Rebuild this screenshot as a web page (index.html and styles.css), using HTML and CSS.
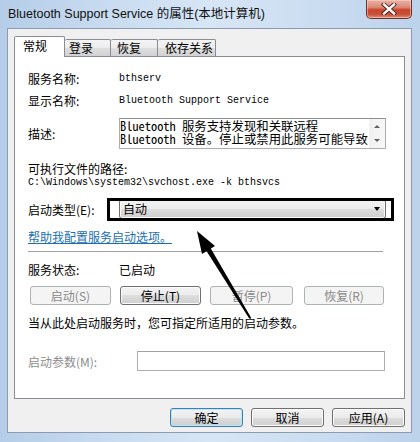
FILE: index.html
```html
<!DOCTYPE html>
<html>
<head>
<meta charset="utf-8">
<title>Bluetooth Support Service 的属性</title>
<link rel="stylesheet" href="styles.css">
</head>
<body>
<div class="window">
  <div class="titlebar">
    <div class="title">Bluetooth Support Service 的属性(本地计算机)</div>
    <div class="close">
      <svg width="16" height="12" viewBox="0 0 16 12"><path d="M3 1.5 L13 10.5 M13 1.5 L3 10.5" stroke="#4a1e18" stroke-width="4.2" stroke-linecap="square"/><path d="M3 1.5 L13 10.5 M13 1.5 L3 10.5" stroke="#ffffff" stroke-width="2.4" stroke-linecap="square"/></svg>
    </div>
  </div>
  <div class="client">
    <div class="tabs">
      <div class="tab active t1">常规</div>
      <div class="tab t2">登录</div>
      <div class="tab t3">恢复</div>
      <div class="tab t4">依存关系</div>
    </div>
    <div class="panel">
      <div class="row r1"><span class="lbl">服务名称:</span><span class="mono">bthserv</span></div>
      <div class="row r2"><span class="lbl">显示名称:</span><span class="mono">Bluetooth Support Service</span></div>
      <div class="row r3"><span class="lbl">描述:</span>
        <div class="desc">
          <div class="desctext">Bluetooth 服务支持发现和关联远程<br>Bluetooth 设备。停止或禁用此服务可能导致</div>
          <div class="vscroll"><span class="up"></span><span class="down"></span></div>
        </div>
      </div>
      <div class="row r4"><span>可执行文件的路径:</span></div>
      <div class="path mono">C:\Windows\system32\svchost.exe -k bthsvcs</div>
      <div class="row r6"><span class="lbl">启动类型(E):</span>
        <div class="combo"><span class="ctext">自动</span><span class="drop"></span></div>
      </div>
      <div class="linkrow"><span class="link">帮助我配置服务启动选项。</span></div>
      <div class="sep"></div>
      <div class="row r8"><span class="lbl">服务状态:</span><span>已启动</span></div>
      <div class="btnrow">
        <div class="btn dis b1">启动(S)</div>
        <div class="btn b2">停止(T)</div>
        <div class="btn dis b3">暂停(P)</div>
        <div class="btn dis b4">恢复(R)</div>
      </div>
      <div class="note">当从此处启动服务时，您可指定所适用的启动参数。</div>
      <div class="row r11"><span class="lbl lbl2 distext">启动参数(M):</span><div class="input"></div></div>
    </div>
    <div class="footer">
      <div class="btn fbtn default">确定</div>
      <div class="btn fbtn">取消</div>
      <div class="btn fbtn">应用(A)</div>
    </div>
  </div>
  <div class="highlight"></div>
  <svg class="arrow" width="420" height="442" viewBox="0 0 420 442">
    <polygon points="197,231 215,246 202,254" fill="#000"/>
    <polygon points="210.5,248 206.5,251 249.2,318.5 251,317.4" fill="#000"/>
  </svg>
</div>
</body>
</html>
```
FILE: styles.css
```css
* { box-sizing: border-box; margin: 0; padding: 0; }
body {
  width: 420px; height: 442px; overflow: hidden;
  font-family: "Noto Sans CJK SC", sans-serif;
  font-size: 12px; color: #000;
  background: #c4d8ee;
}
.window {
  position: relative;
  width: 420px; height: 442px;
  display: flex; flex-direction: column;
  padding: 0 8px 9px 7px;
  background: linear-gradient(to right, #b5cde8 0%, #c8dbf0 25%, #d7e6f6 50%, #cbddf1 75%, #bcd2eb 100%);
}
.titlebar {
  flex: none; height: 28px;
  display: flex; align-items: flex-start; justify-content: space-between;
}
.title {
  padding: 6px 0 0 1px;
  font-family: "Liberation Sans", "Noto Sans CJK SC", sans-serif;
  font-size: 12.5px; line-height: 17px; color: #111;
}
.close {
  width: 46px; height: 19px;
  border: 1px solid #6e3028; border-top: none;
  border-radius: 0 0 5px 5px;
  background: linear-gradient(#eab2a6 0%, #dc8a78 40%, #c8452c 55%, #c75237 80%, #e0907a 100%);
  box-shadow: inset 0 0 0 1px rgba(255,220,210,0.5);
  display: flex; align-items: center; justify-content: center;
}
.client {
  flex: 1;
  display: flex; flex-direction: column;
  background: #f0f0f0;
  border: 1px solid #8c9bb0;
  padding: 7px 6px 5px 6px;
}
.tabs { flex: none; height: 20px; display: flex; align-items: flex-end; }
.tab {
  height: 17px;
  border: 1px solid #898c95; border-bottom: none;
  border-radius: 2px 2px 0 0;
  background: linear-gradient(#f4f4f4 0%, #ececec 50%, #dedede 50%, #d2d2d2 100%);
  font-size: 12px; line-height: 16px;
}
.tab.active {
  position: relative; z-index: 1;
  height: 21px; margin-bottom: -1px;
  background: #ffffff;
  line-height: 18px;
}
.t1 { width: 51px; padding-left: 8px; }
.t2 { width: 46px; padding-left: 4px; border-left: none; }
.t3 { width: 47px; padding-left: 6px; border-left: none; }
.t4 { width: 58px; padding-left: 7px; border-left: none; }
.panel {
  flex: 1;
  background: #ffffff;
  border: 1px solid #898c95;
  padding: 13px 18px 0 13px;
  display: flex; flex-direction: column;
}
.row { display: flex; align-items: center; flex: none; }
.lbl { width: 91px; flex: none; }
.lbl2 { width: 109px; }
.mono { font-family: "Liberation Mono", "Noto Sans CJK SC", monospace; font-size: 10px; }
.r1 { height: 16px; margin-top: 0; }
.r2 { height: 16px; margin-top: 6px; }
.r3 { height: 31px; margin-top: 10px; }
.desc {
  width: 267px; height: 31px;
  border: 1px solid #abadb3; border-top-color: #8e8f91;
  display: flex; background: #fff;
}
.desctext {
  flex: 1;
  font-family: "Noto Sans Mono CJK SC", "Liberation Mono", monospace;
  font-size: 12.4px; line-height: 12.5px;
  white-space: nowrap; padding-top: 1px;
}
.vscroll {
  width: 16px; flex: none;
  background: linear-gradient(to right, #f0f0f0, #f8f8f8);
  display: flex; flex-direction: column; align-items: center; justify-content: space-around;
}
.up, .down { width: 0; height: 0; border-left: 3px solid transparent; border-right: 3px solid transparent; }
.up { border-bottom: 3px solid #606060; }
.down { border-top: 3px solid #606060; }
.r4 { height: 16px; margin-top: 11px; }
.path { flex: none; height: 14px; line-height: 14px; }
.r6 { height: 20px; margin-top: 9px; }
.combo {
  width: 267px; height: 20px;
  border: 1px solid #707070; border-radius: 3px;
  background: linear-gradient(#f3f3f3 0%, #ebebeb 50%, #dddddd 50%, #cfcfcf 100%);
  box-shadow: inset 0 0 0 1px #fafafa;
  display: flex; align-items: center; justify-content: space-between;
  padding: 0 5px 0 3px;
}
.ctext { line-height: 16px; }
.drop { width: 0; height: 0; border-left: 3.5px solid transparent; border-right: 3.5px solid transparent; border-top: 4px solid #000; }
.linkrow { flex: none; height: 16px; margin-top: 10px; line-height: 16px; }
.link { color: #1a6fb4; text-decoration: underline; }
.sep { flex: none; width: 355px; height: 0; border-top: 1px solid #a0a0a0; margin-top: 6px; }
.r8 { height: 16px; margin-top: 9px; }
.btnrow { flex: none; display: flex; height: 19px; margin-top: 9px; padding-left: 2px; }
.btn {
  height: 19px;
  border: 1px solid #707070; border-radius: 3px;
  background: linear-gradient(#f3f3f3 0%, #ebebeb 50%, #dddddd 50%, #cfcfcf 100%);
  box-shadow: inset 0 0 0 1px #fbfbfb;
  display: flex; align-items: center; justify-content: center;
  font-size: 12px; line-height: 16px;
}
.btn.dis {
  border-color: #adb2b5;
  background: #f4f4f4;
  box-shadow: none;
  color: #8a8a8a;
}
.b1 { width: 81px; }
.b2 { width: 81px; margin-left: 9px; }
.b3 { width: 83px; margin-left: 9px; }
.b4 { width: 80px; margin-left: 11px; }
.note { flex: none; height: 16px; line-height: 16px; margin-top: 10px; }
.r11 { height: 20px; margin-top: 20px; }
.distext { color: #8d8d8d; }
.input { width: 248px; height: 20px; border: 1px solid #abadb3; border-top-color: #a3a3a3; background: #fff; }
.footer { flex: none; height: 19px; margin-top: 9px; display: flex; justify-content: flex-end; gap: 8px; }
.fbtn { width: 73px; }
.fbtn.default { border-color: #3c7fb1; box-shadow: inset 0 0 0 1px #b9e6f8; }
.highlight {
  position: absolute; left: 107px; top: 198px;
  width: 287px; height: 23px;
  border: 3px solid #000;
  pointer-events: none;
}
.arrow { position: absolute; left: 0; top: 0; pointer-events: none; }
```
